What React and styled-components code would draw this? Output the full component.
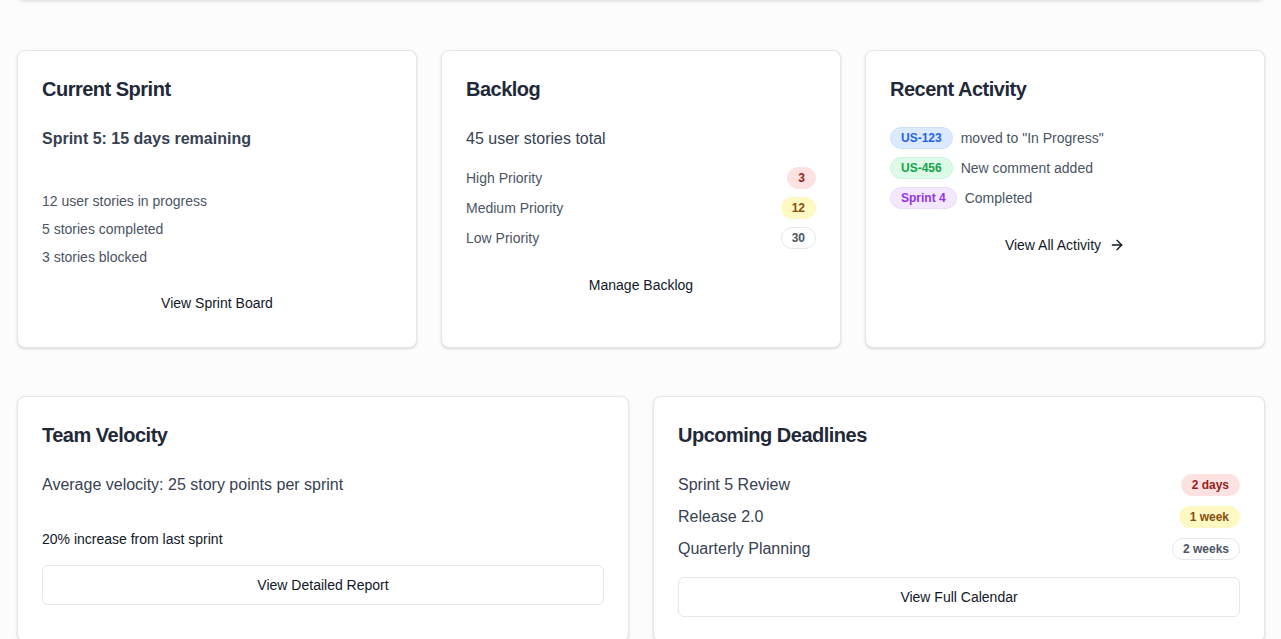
import React from "react";
import styled, { createGlobalStyle } from "styled-components";
import { ArrowRight } from "lucide-react";

const GlobalStyle = createGlobalStyle`
  * { box-sizing: border-box; }
  body {
    margin: 0;
    background: #fcfcfc;
    font-family: "Liberation Sans", Arial, sans-serif;
    color: #111827;
  }
`;

/* Page wrapper */
const Page = styled.div`
  padding: 0 16px 40px 17px;
`;

/* Card that sits above the fold (scrolled out of view) */
const TopCard = styled.div`
  height: 41px;
  margin-top: -40px;
  background: #fff;
  border: 1px solid #e5e7eb;
  border-radius: 8px;
  box-shadow: 0 1px 3px rgba(0, 0, 0, 0.1);
`;

const Grid = styled.div`
  display: grid;
  grid-template-columns: repeat(${(p) => p.cols}, 1fr);
  gap: 24px;
  margin-top: ${(p) => p.top || 48}px;
`;

const Card = styled.div`
  background: #fff;
  border: 1px solid #e5e7eb;
  border-radius: 8px;
  box-shadow: 0 1px 3px rgba(0, 0, 0, 0.1), 0 1px 2px rgba(0, 0, 0, 0.06);
  padding: 24px;
  display: flex;
  flex-direction: column;
`;

const Title = styled.h3`
  margin: 0 0 24px;
  font-size: 20px;
  line-height: 28px;
  font-weight: 700;
  color: #1f2937;
  letter-spacing: -0.5px;
`;

const Lead = styled.p`
  margin: 0;
  font-size: 16px;
  line-height: 24px;
  font-weight: ${(p) => (p.bold ? 700 : 400)};
  color: #374151;
`;

const List = styled.div`
  display: flex;
  flex-direction: column;
  gap: ${(p) => p.gap || 8}px;
  margin-top: ${(p) => p.top || 0}px;
`;

const Item = styled.p`
  margin: 0;
  font-size: 14px;
  line-height: 20px;
  color: #4b5563;
`;

const Row = styled.div`
  display: flex;
  align-items: center;
  justify-content: ${(p) => (p.spread ? "space-between" : "flex-start")};
  gap: 8px;
  min-height: ${(p) => p.h || 22}px;
  font-size: ${(p) => p.size || 14}px;
  color: ${(p) => (p.size === 16 ? "#374151" : "#4b5563")};
`;

const badgeColors = {
  red: ["#fee2e2", "#fee2e2", "#991b1b"],
  yellow: ["#fef9c3", "#fef9c3", "#854d0e"],
  outline: ["#ffffff", "#e5e7eb", "#4b5563"],
  blue: ["#dbeafe", "#cfe0fb", "#2563eb"],
  green: ["#dcfce7", "#cdf3da", "#16a34a"],
  purple: ["#f3e8ff", "#eadcfa", "#9333ea"],
};

const Badge = styled.span`
  display: inline-flex;
  align-items: center;
  height: 22px;
  padding: 0 10px;
  border-radius: 999px;
  font-size: 12px;
  font-weight: 700;
  background: ${(p) => badgeColors[p.tone][0]};
  border: 1px solid ${(p) => badgeColors[p.tone][1]};
  color: ${(p) => badgeColors[p.tone][2]};
  flex-shrink: 0;
`;

const Button = styled.button`
  display: flex;
  align-items: center;
  justify-content: center;
  gap: 8px;
  width: 100%;
  height: 40px;
  margin-top: ${(p) => p.top || 16}px;
  background: #fff;
  border: 1px solid ${(p) => (p.outline ? "#e5e7eb" : "transparent")};
  border-radius: 6px;
  font-family: inherit;
  font-size: 14px;
  color: #111827;
  cursor: pointer;
`;

const Note = styled.p`
  margin: 32px 0 0;
  font-size: 14px;
  line-height: 20px;
  color: #111827;
`;

export default function App() {
  return (
    <>
      <GlobalStyle />
      <Page>
        <TopCard />

        <Grid cols={3} top={49}>
          <Card>
            <Title>Current Sprint</Title>
            <Lead bold>Sprint 5: 15 days remaining</Lead>
            <List top={40}>
              <Item>12 user stories in progress</Item>
              <Item>5 stories completed</Item>
              <Item>3 stories blocked</Item>
            </List>
            <Button>View Sprint Board</Button>
          </Card>

          <Card>
            <Title>Backlog</Title>
            <Lead>45 user stories total</Lead>
            <List top={16}>
              <Row spread>
                <span>High Priority</span>
                <Badge tone="red">3</Badge>
              </Row>
              <Row spread>
                <span>Medium Priority</span>
                <Badge tone="yellow">12</Badge>
              </Row>
              <Row spread>
                <span>Low Priority</span>
                <Badge tone="outline">30</Badge>
              </Row>
            </List>
            <Button>Manage Backlog</Button>
          </Card>

          <Card>
            <Title>Recent Activity</Title>
            <List>
              <Row>
                <Badge tone="blue">US-123</Badge>
                <span>moved to "In Progress"</span>
              </Row>
              <Row>
                <Badge tone="green">US-456</Badge>
                <span>New comment added</span>
              </Row>
              <Row>
                <Badge tone="purple">Sprint 4</Badge>
                <span>Completed</span>
              </Row>
            </List>
            <Button>
              View All Activity
              <ArrowRight size={16} strokeWidth={2} />
            </Button>
          </Card>
        </Grid>

        <Grid cols={2}>
          <Card>
            <Title>Team Velocity</Title>
            <Lead>Average velocity: 25 story points per sprint</Lead>
            <Note>20% increase from last sprint</Note>
            <Button outline>View Detailed Report</Button>
          </Card>

          <Card>
            <Title>Upcoming Deadlines</Title>
            <List>
              <Row spread size={16} h={24}>
                <span>Sprint 5 Review</span>
                <Badge tone="red">2 days</Badge>
              </Row>
              <Row spread size={16} h={24}>
                <span>Release 2.0</span>
                <Badge tone="yellow">1 week</Badge>
              </Row>
              <Row spread size={16} h={24}>
                <span>Quarterly Planning</span>
                <Badge tone="outline">2 weeks</Badge>
              </Row>
            </List>
            <Button outline>View Full Calendar</Button>
          </Card>
        </Grid>
      </Page>
    </>
  );
}
